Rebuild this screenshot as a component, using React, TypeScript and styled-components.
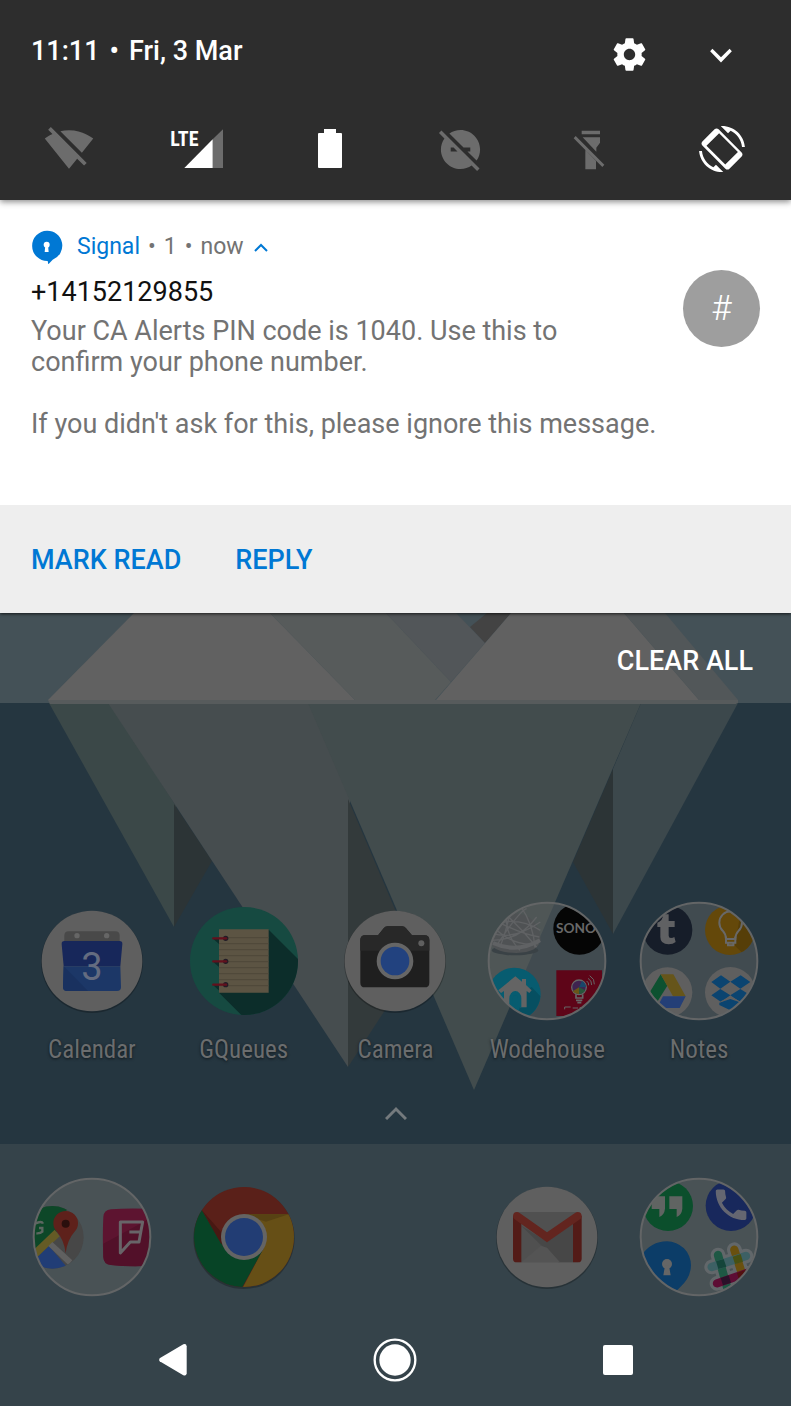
import React from "react";
import styled, { createGlobalStyle } from "styled-components";

const GlobalStyle = createGlobalStyle`
  *, *::before, *::after { box-sizing: border-box; }
  html, body, #root { min-height: 100%; }
  body { margin: 0; background: #35434a; font-family: Roboto, "Liberation Sans", sans-serif; }
  button { font: inherit; border: 0; background: none; padding: 0; color: inherit; cursor: pointer; }
  svg { display: block; flex: none; }
  h2, p { margin: 0; }
`;

const Screen = styled.main`
  display: flex;
  flex-direction: column;
  min-height: 100vh;
  overflow-x: hidden;
`;

/* ---------- quick settings ---------- */

const QuickSettings = styled.header`
  position: relative;
  z-index: 2;
  background: #2d2d2d;
  color: #fff;
  box-shadow: 0 2px 6px rgba(0, 0, 0, 0.45);
`;

const ClockRow = styled.div`
  display: flex;
  align-items: center;
  gap: 44px;
  height: 98px;
  padding: 10px 46px 0 31px;
`;

const Clock = styled.div`
  flex: 1;
  padding-bottom: 6px;
  font-size: 27px;
  font-weight: 500;
  line-height: 32px;
  display: flex;
  gap: 10px;
`;

const IconButton = styled.button`
  display: flex;
  align-items: center;
  justify-content: center;
  width: 48px;
  height: 48px;
`;

const Tiles = styled.div`
  display: grid;
  grid-template-columns: repeat(6, 1fr);
  height: 102px;
  padding: 0 4px;
`;

const Tile = styled.button<{ $on?: boolean }>`
  display: flex;
  align-items: center;
  justify-content: center;
  color: ${(p) => (p.$on ? "#fff" : "#6c6c6c")};
`;

/* ---------- notification ---------- */

const Notification = styled.article`
  position: relative;
  z-index: 1;
  background: #fff;
  box-shadow: 0 1px 3px rgba(0, 0, 0, 0.7);
`;

const NotificationContent = styled.div`
  min-height: 305px;
  padding: 29px 31px 64px;
`;

const AppLine = styled.div`
  display: flex;
  align-items: center;
  gap: 8px;
  height: 34px;
  margin-bottom: 7px;
  padding-top: 2px;
  font-size: 23px;
  line-height: 32px;
  color: #737373;
`;

const AppName = styled.span`
  margin-left: 6px;
  color: #0078d4;
`;

const Avatar = styled.div`
  float: right;
  display: flex;
  align-items: center;
  justify-content: center;
  width: 77px;
  height: 77px;
  margin-left: 48px;
  border-radius: 50%;
  background: #9e9e9e;
  color: #fff;
  font-size: 35px;
  font-weight: 300;
`;

const Sender = styled.h2`
  padding-top: 7px;
  margin-bottom: 8px;
  font-size: 27px;
  font-weight: 400;
  line-height: 31px;
  color: #111;
`;

const Message = styled.p`
  font-size: 27px;
  line-height: 31px;
  color: #737373;
  white-space: pre-line;
`;

const Actions = styled.div`
  display: flex;
  align-items: center;
  gap: 54px;
  height: 108px;
  padding: 2px 31px 0;
  background: #eee;
`;

const Action = styled.button`
  height: 64px;
  font-size: 27px;
  font-weight: 500;
  color: #0078d4;
`;

/* ---------- home screen ---------- */

const Home = styled.section`
  position: relative;
  isolation: isolate;
  background: #253640;
`;

const Wallpaper = styled.svg`
  position: absolute;
  inset: 0;
  z-index: -1;
  width: 100%;
  height: 100%;
`;

const ClearRow = styled.div`
  display: flex;
  justify-content: flex-end;
  align-items: center;
  height: 90px;
  padding: 6px 38px 0;
`;

const ClearAll = styled.button`
  height: 56px;
  font-size: 27px;
  font-weight: 500;
  color: #fff;
`;

const AppRow = styled.nav<{ $top: number }>`
  display: grid;
  grid-template-columns: repeat(5, 1fr);
  padding: ${(p) => p.$top}px 16px 0;
`;

const AppButton = styled.button`
  display: flex;
  flex-direction: column;
  align-items: center;
`;

const AppLabel = styled.span`
  margin-top: 13px;
  font-family: "Roboto Condensed", "Liberation Sans Narrow", Roboto, sans-serif;
  font-size: 25px;
  line-height: 32px;
  color: #6b6d6e;
  text-shadow: 0 1px 3px rgba(0, 0, 0, 0.6);
`;

const DrawerHandle = styled.button`
  display: flex;
  justify-content: center;
  align-items: center;
  width: 100%;
  height: 78px;
  padding-top: 16px;
`;

const Dock = styled.footer`
  flex: 1;
  background: #35434a;
`;

const SystemKeys = styled.nav`
  display: grid;
  grid-template-columns: repeat(3, 1fr);
  height: 92px;
  margin-top: 17px;
  padding: 0 62px;
`;

const SystemKey = styled.button`
  display: flex;
  align-items: center;
  justify-content: center;
`;

/* ---------- status glyphs ---------- */

const Glyph = ({ size, d }: { size: number; d: string }) => (
  <svg width={size} height={size} viewBox="0 0 24 24" fill="currentColor" fillRule="evenodd" aria-hidden="true">
    <path d={d} />
  </svg>
);

const GEAR =
  "M19.43 12.98c.04-.32.07-.64.07-.98s-.03-.66-.07-.98l2.11-1.65c.19-.15.24-.42.12-.64l-2-3.46c-.12-.22-.39-.3-.61-.22l-2.49 1c-.52-.4-1.08-.73-1.69-.98l-.38-2.65C14.46 2.18 14.25 2 14 2h-4c-.25 0-.46.18-.49.42l-.38 2.65c-.61.25-1.17.59-1.69.98l-2.49-1c-.23-.09-.49 0-.61.22l-2 3.46c-.13.22-.07.49.12.64l2.11 1.65c-.04.32-.07.65-.07.98s.03.66.07.98l-2.11 1.65c-.19.15-.24.42-.12.64l2 3.46c.12.22.39.3.61.22l2.49-1c.52.4 1.08.73 1.69.98l.38 2.65c.03.24.24.42.49.42h4c.25 0 .46-.18.49-.42l.38-2.65c.61-.25 1.17-.59 1.69-.98l2.49 1c.23.09.49 0 .61-.22l2-3.46c.12-.22.07-.49-.12-.64l-2.11-1.65zM12 15.5c-1.93 0-3.5-1.57-3.5-3.5s1.57-3.5 3.5-3.5 3.5 1.57 3.5 3.5-1.57 3.5-3.5 3.5z";
const EXPAND = "M16.9 9 12 13.8 7.1 9 5.8 10.4 12 16.8l6.2-6.4z";
const WIFI_OFF =
  "M23.64 7c-.45-.34-4.93-4-11.64-4-1.5 0-2.89.19-4.15.48L18.18 13.8 23.64 7zm-6.6 8.22L3.27 1.44 2 2.72l2.05 2.06C1.91 5.76.59 6.82.36 7l11.63 14.49.01.01.01-.01 3.9-4.86 3.32 3.32 1.27-1.27-3.46-3.46z";
const DND_OFF =
  "M17 11v2h-1.46l4.68 4.68C21.34 16.07 22 14.11 22 12c0-5.52-4.48-10-10-10-2.11 0-4.07.66-5.68 1.78L13.54 11H17zM2.27 2.27L1 3.54l2.78 2.78C2.66 7.93 2 9.89 2 12c0 5.52 4.48 10 10 10 2.11 0 4.07-.66 5.68-1.78L20.46 23l1.27-1.27L2.27 2.27zM7 13v-2h1.46l2 2H7z";
const ROTATE =
  "M16.48 2.52c3.27 1.55 5.61 4.72 5.97 8.48h1.5C23.44 4.84 18.29 0 12 0l-.66.03 3.81 3.81 1.33-1.32zm-6.25-.77c-.59-.59-1.54-.59-2.12 0L1.75 8.11c-.59.59-.59 1.54 0 2.12l12.02 12.02c.59.59 1.54.59 2.12 0l6.36-6.36c.59-.59.59-1.54 0-2.12L10.23 1.75zM13.7 20.1 3.9 10.3l6.6-6.5 9.8 9.8zM7.52 21.48C4.25 19.94 1.91 16.76 1.55 13H.05C.56 19.16 5.71 24 12 24l.66-.03-3.81-3.81-1.33 1.32z";
const PHONE =
  "M6.62 10.79c1.44 2.83 3.76 5.14 6.59 6.59l2.2-2.2c.27-.27.67-.36 1.02-.24 1.12.37 2.33.57 3.57.57.55 0 1 .45 1 1V20c0 .55-.45 1-1 1-9.39 0-17-7.61-17-17 0-.55.45-1 1-1h3.5c.55 0 1 .45 1 1 0 1.25.2 2.45.57 3.57.11.35.03.74-.25 1.02l-2.2 2.2z";

const LteGlyph = () => (
  <svg width="60" height="46" viewBox="508 380 180 138" aria-hidden="true">
    <text x="509" y="441" fill="#fff" fontFamily='"Roboto Condensed","Liberation Sans Narrow",Roboto' fontWeight="700" fontSize="60">
      LTE
    </text>
    <path d="M636 420 667 390V506H636z" fill="#6c6c6c" />
    <path d="M551 506 636 420V506z" fill="#fff" />
  </svg>
);

const BatteryGlyph = () => (
  <svg width="26" height="40" viewBox="0 0 26 40" fill="currentColor" aria-hidden="true">
    <path d="M7 0H19V4H24Q25 4 25 5V38Q25 39 24 39H2Q1 39 1 38V5Q1 4 2 4H7z" />
  </svg>
);

const TorchOffGlyph = () => (
  <svg width="41" height="46" viewBox="540 380 123 138" fill="currentColor" aria-hidden="true">
    <path d="M572 394H627V405H572zM575 414H627V430L616 445V457zM583 452 615 485V510H583zM554 410 640 496 634 503 548 417z" />
  </svg>
);

const SignalBadge = () => (
  <svg width="32" height="34" viewBox="96 52 96 102" aria-hidden="true">
    <path d="M144 54a45 45 0 0 1 17 87L148 155 146 145A45 45 0 1 1 144 54z" fill="#0078d4" />
    <circle cx="143" cy="96" r="9" fill="#fff" />
    <path d="M139 98h8l2 20h-12z" fill="#fff" />
  </svg>
);

/* ---------- launcher icons ---------- */

const AppIcon = ({ cx, cy, children }: { cx: number; cy: number; children: React.ReactNode }) => (
  <svg width="120" height="120" viewBox={`${cx - 180} ${cy - 180} 360 360`} aria-hidden="true">
    {children}
  </svg>
);

const Plate = ({ cx, cy }: { cx: number; cy: number }) => (
  <>
    <circle cx={cx} cy={cy + 3} r="153" fill="#000" opacity="0.25" />
    <circle cx={cx} cy={cy} r="151" fill="#5f5f5f" />
  </>
);

const Folder = ({ id, cx, cy, children }: { id: string; cx: number; cy: number; children: React.ReactNode }) => (
  <AppIcon cx={cx} cy={cy}>
    <clipPath id={id}>
      <circle cx={cx} cy={cy} r="174" />
    </clipPath>
    <circle cx={cx} cy={cy} r="176" fill="#5c5f5f" fillOpacity="0.52" />
    <g clipPath={`url(#${id})`}>{children}</g>
    <circle cx={cx} cy={cy} r="175" fill="none" stroke="#636566" strokeWidth="6" />
  </AppIcon>
);

const CalendarIcon = () => (
  <AppIcon cx={217} cy={212}>
    <Plate cx={217} cy={212} />
    <path d="M134 160V136q0-13 13-13H287q13 0 13 13V160z" fill="#494949" />
    <circle cx="172" cy="136" r="8" fill="#666" />
    <circle cx="261" cy="136" r="8" fill="#666" />
    <path d="M135 152H299q10 0 9 10L302 228H132L126 162q-1-10 9-10z" fill="#17275a" />
    <path d="M132 228H302L304 290q0 12-12 12H142q-12 0-12-12z" fill="#1c3767" />
    <path d="M132 228 205 302H142q-12 0-12-12z" fill="#19315f" />
    <text x="217" y="268" textAnchor="middle" fontFamily="Roboto" fontSize="114" fill="#646c80">
      3
    </text>
  </AppIcon>
);

const GQueuesIcon = () => (
  <AppIcon cx={672} cy={212}>
    <clipPath id="gq">
      <circle cx="672" cy="212" r="162" />
    </clipPath>
    <g clipPath="url(#gq)">
      <path d="M500 40H850V390H500z" fill="#164a41" />
      <path d="M746 118 850 222V390H680L597 307z" fill="#0c2d2a" />
      <path d="M580 146 598 162V146zM580 215 598 231V215zM580 285 598 301V285z" fill="#0c2d2a" />
    </g>
    <path d="M597 117H746V307H597z" fill="#5c5443" />
    <path
      d="M597 142H746M597 160H746M597 178H746M597 196H746M597 214H746M597 232H746M597 250H746M597 268H746M597 286H746"
      stroke="#4f4839"
      strokeWidth="3"
    />
    {[144, 213, 283].map((y) => (
      <g key={y}>
        <circle cx="617" cy={y} r="8" fill="#221c26" />
        <path d={`M580 ${y}H618`} stroke="#63101d" strokeWidth="7" strokeLinecap="round" />
      </g>
    ))}
  </AppIcon>
);

const CameraIcon = () => (
  <AppIcon cx={227} cy={212}>
    <Plate cx={227} cy={212} />
    <path d="M137 135H176L193 114q4-6 12-6H248q8 0 12 6L278 135H316q14 0 14 14V277q0 14-14 14H137q-14 0-14-14V149q0-14 14-14z" fill="#1f1f1f" />
    <path d="M137 135H176L193 114q4-6 12-6H248q8 0 12 6L278 135H316q14 0 14 14V181H123V149q0-14 14-14z" fill="#282828" />
    <circle cx="306" cy="159" r="9" fill="#5f5f5f" />
    <circle cx="227" cy="212" r="55" fill="#666" />
    <circle cx="227" cy="212" r="43" fill="#22427f" />
  </AppIcon>
);

const WodehouseIcon = () => (
  <Folder id="wode" cx={681} cy={212}>
    <ellipse cx="585" cy="180" rx="70" ry="15" fill="#3a4246" />
    <path d="M519 170A73 76 0 1 1 661 150Q655 186 590 188 540 188 519 170z" fill="#4f5254" />
    <g fill="none" stroke="#606264" strokeWidth="4">
      <path d="M519 100Q600 80 661 120M520 130Q580 150 661 95M530 165Q600 60 620 55M545 60Q600 110 650 170M560 50Q550 130 600 180M520 110Q580 170 655 160M600 45Q640 100 645 172M525 90Q600 130 658 140M515 150Q600 150 650 80M575 45Q560 120 540 170" />
      <path d="M519 158Q590 190 660 150" strokeWidth="12" />
    </g>
    <circle cx="778" cy="115" r="78" fill="#050505" />
    <text x="708" y="128" fontFamily="Lato" fontWeight="700" fontSize="41" fill="#686868">
      SONO
    </text>
    <circle cx="583" cy="311" r="79" fill="#075c70" />
    <path d="M661 318A79 79 0 0 1 583 390L600 351H618V300L635 290z" fill="#064f61" />
    <path d="M535 300 586 258 606 274V266H618V284L635 300 628 308 620 302V351H600V322A14 18 0 0 0 572 322V351H552V302L543 308z" fill="#646464" />
    <path d="M568 351V324A18 22 0 0 1 604 324V351H594V326A8 11 0 0 0 578 326V351z" fill="#075c70" />
    <path d="M709 240H846V377H709z" fill="#5e0518" />
    <circle cx="777" cy="291" r="22" fill="#3f2350" stroke="#666" strokeWidth="4" />
    <path d="M777 291 758 303A22 22 0 0 0 777 311z" fill="#6a5518" />
    <path d="M777 291V311A22 22 0 0 0 796 300z" fill="#27563a" />
    <path d="M777 291 798 290A22 22 0 0 0 786 272z" fill="#19466a" />
    <path d="M768 312V323H788V312M768 330H787M772 337H784" stroke="#666" strokeWidth="5" fill="none" />
    <path d="M800 272Q807 277 806 285M804 264Q816 271 815 284M809 256Q825 266 823 282" stroke="#666" strokeWidth="3" fill="none" />
    <path d="M734 357V350H752M758 353H774M779 352H812" stroke="#666" strokeWidth="3" fill="none" />
  </Folder>
);

const NotesIcon = () => (
  <Folder id="notes" cx={297} cy={212}>
    <circle cx="203" cy="119" r="74" fill="#161d29" />
    <path
      d="M190 72H206V92H224V110H206V136Q206 143 213 143 219 143 223 140L227 155Q219 162 206 162 181 162 181 140V110H172V97Q188 93 190 72z"
      fill="#606163"
    />
    <clipPath id="keep">
      <circle cx="390" cy="119" r="75" />
    </clipPath>
    <circle cx="390" cy="119" r="75" fill="#64480a" />
    <path d="M418 88 480 150V210H450L405 166z" fill="#563e08" clipPath="url(#keep)" />
    <path d="M378 146Q378 132 368 121A34 34 0 1 1 416 121Q406 132 406 146z" fill="none" stroke="#686868" strokeWidth="6" />
    <path d="M378 139V157H406V139M384 157V165H400V157" stroke="#686868" strokeWidth="6" fill="none" />
    <circle cx="202" cy="306" r="75" fill="#5f5f5f" />
    <path d="M182 252 202 286 170 337 151 303z" fill="#0d5130" />
    <path d="M182 252H220L257 318H219z" fill="#66551a" />
    <path d="M189 318H257L239 353H170z" fill="#243f77" />
    <circle cx="391" cy="306" r="76" fill="#5f5f5f" />
    <path
      d="M334 275 363 255 391 274 361 295zM391 274 422 255 451 275 421 295zM334 315 361 296 391 315 363 335zM391 315 421 296 451 315 420 335zM358 337 391 326 424 337V344L391 360 358 344z"
      fill="#0b4470"
    />
    <path d="M361 335 391 319 421 335" fill="none" stroke="#5f5f5f" strokeWidth="3" />
  </Folder>
);

const PlacesIcon = () => (
  <Folder id="places" cx={217} cy={230}>
    <clipPath id="map">
      <circle cx="98" cy="231" r="94" />
    </clipPath>
    <g clipPath="url(#map)">
      <path d="M0 130H200V330H0z" fill="#474747" />
      <path d="M0 130H150L110 215 0 310z" fill="#0d4728" />
      <path d="M40 270 105 208 120 228 48 295z" fill="#655b25" />
      <path d="M48 295 88 257 150 330H40z" fill="#213d76" />
      <path d="M86 257 98 245 158 300 146 314z" fill="#606060" />
    </g>
    <path d="M46 190Q66 180 70 190M58 203H68V214Q62 220 50 219" fill="none" stroke="#5c6660" strokeWidth="7" />
    <path d="M138 279Q134 240 112 215A37 37 0 1 1 164 215Q142 240 138 279z" fill="#5e211b" />
    <circle cx="138" cy="190" r="12" fill="#2a0f0d" />
    <path d="M274 147Q330 142 400 146V316Q330 320 274 314 252 312 251 290 248 230 251 170 252 149 274 147z" fill="#5d1430" />
    <path d="M251 250 400 170V316Q330 320 274 314 252 312 251 290z" fill="#521029" />
    <path d="M302 185H369L365 206 358 245H332L302 278zM329 215H362" fill="none" stroke="#686468" strokeWidth="9" strokeLinejoin="round" />
  </Folder>
);

const ChromeIcon = () => (
  <AppIcon cx={672} cy={230}>
    <circle cx="672" cy="234" r="152" fill="#000" opacity="0.25" />
    <clipPath id="chrome">
      <circle cx="672" cy="230" r="150" />
    </clipPath>
    <g clipPath="url(#chrome)">
      <path d="M522 80H822V380H522z" fill="#5a2019" />
      <path d="M672 162H830V390H664L731 264z" fill="#664f16" />
      <path d="M540 140 613 264 672 298 731 264 666 382H510V140z" fill="#074426" />
      <path d="M546 150 604 252 612 225z" fill="#481813" />
      <path d="M672 162H806L738 184z" fill="#574213" />
    </g>
    <circle cx="672" cy="230" r="69" fill="#646464" />
    <circle cx="672" cy="230" r="57" fill="#223d74" />
  </AppIcon>
);

const GmailIcon = () => (
  <AppIcon cx={201} cy={230}>
    <Plate cx={201} cy={230} />
    <path d="M110 155H294V306H110z" fill="#505050" />
    <path d="M124 196 235 306H279V190L201 244z" fill="#474747" />
    <path d="M124 306 183 256 201 262 240 306z" fill="#545454" />
    <path d="M99 166H124V306H110q-11 0-11-11zM279 166H305V295q0 11-11 11H279z" fill="#531b17" />
    <path d="M99 168q0-13 12-13 4 0 8 3L201 216 285 158q4-3 8-3 12 0 12 13 0 6-5 9L201 246 104 177q-5-3-5-9z" fill="#63251f" />
  </AppIcon>
);

const ChatIcon = () => (
  <Folder id="chat" cx={656} cy={230}>
    <circle cx="563" cy="137" r="75" fill="#0b4f2c" />
    <path d="M514 108H554V145Q552 164 537 170V146H514zM567 108H606V145Q604 164 589 170V146H567z" fill="#606462" />
    <circle cx="752" cy="136" r="76" fill="#18285c" />
    <path d={PHONE} transform="translate(691 72) scale(5.1)" fill="#646671" />
    <path d="M560 243A72 72 0 0 1 632 315Q631 352 600 380L580 400 480 340V290Q510 243 560 243z" fill="#0c3d68" />
    <circle cx="560" cy="311" r="15" fill="#666" />
    <path d="M554 316H566L571 345H549z" fill="#666" />
    <g fill="none" strokeLinecap="round">
      <path d="M713 284 740 380M762 268 788 350M694 320 797 287M710 369 800 338" stroke="#62676a" strokeWidth="44" />
      <path d="M713 284 740 380" stroke="#1e5844" strokeWidth="25" />
      <path d="M762 268 788 350" stroke="#69500f" strokeWidth="25" />
      <path d="M694 320 797 287" stroke="#3d6064" strokeWidth="25" />
      <path d="M710 369 800 338" stroke="#5d0d34" strokeWidth="25" />
    </g>
    <path d="M707 303 730 296 738 319 714 326z" fill="#14453a" />
    <path d="M757 289 781 281 788 304 764 311z" fill="#485012" />
    <path d="M721 353 745 345 752 367 728 375z" fill="#2b1029" />
    <path d="M770 338 797 328 790 352 776 359z" fill="#521010" />
  </Folder>
);

const apps: [string, React.FC][] = [
  ["Calendar", CalendarIcon],
  ["GQueues", GQueuesIcon],
  ["Camera", CameraIcon],
  ["Wodehouse", WodehouseIcon],
  ["Notes", NotesIcon],
];

const dock: [string, React.FC | null][] = [
  ["Places", PlacesIcon],
  ["Chrome", ChromeIcon],
  ["", null],
  ["Gmail", GmailIcon],
  ["Chat", ChatIcon],
];

const Iceberg = () => (
  <Wallpaper viewBox="0 613 791 531" preserveAspectRatio="xMidYMin slice" aria-hidden="true">
    <path d="M-800 613H1600V1400H-800z" fill="#253640" />
    <path d="M-800 613H1600V703H-800z" fill="#445157" />
    <path d="M134 613H270L355 700H48z" fill="#616161" />
    <path d="M270 613H386L451 682 435 700H355z" fill="#575b5b" />
    <path d="M386 613H456L485 643 451 682z" fill="#525659" />
    <path d="M487 613H511L485 643 470 627z" fill="#434343" />
    <path d="M511 613H624L699 700H436z" fill="#616161" />
    <path d="M624 613H665L738 700H699z" fill="#525759" />
    <path d="M49 703H110L176 806 174 927z" fill="#3b4848" />
    <path d="M174 804 212 861 174 927z" fill="#2c3436" />
    <path d="M641 703H738L613 934V769z" fill="#3c484c" />
    <path d="M613 769V934L573 862z" fill="#2c3436" />
    <path d="M108 703H320L350 799 348 1067z" fill="#464d4f" />
    <path d="M348 799 417 961 348 1067z" fill="#333a3b" />
    <path d="M308 703H641L474 1090z" fill="#424c4d" />
    <path d="M48 700H738V703H737L736 704H50z" fill="#575b5c" />
  </Wallpaper>
);

export default function App() {
  return (
    <Screen>
      <GlobalStyle />
      <QuickSettings>
        <ClockRow>
          <Clock>
            <span>11:11</span>
            <span>•</span>
            <span>Fri, 3 Mar</span>
          </Clock>
          <IconButton aria-label="Settings">
            <Glyph size={39} d={GEAR} />
          </IconButton>
          <IconButton aria-label="Expand">
            <Glyph size={42} d={EXPAND} />
          </IconButton>
        </ClockRow>
        <Tiles>
          <Tile aria-label="Wi-Fi off">
            <Glyph size={50} d={WIFI_OFF} />
          </Tile>
          <Tile $on aria-label="Mobile data">
            <LteGlyph />
          </Tile>
          <Tile $on aria-label="Battery">
            <BatteryGlyph />
          </Tile>
          <Tile aria-label="Do not disturb off">
            <Glyph size={47} d={DND_OFF} />
          </Tile>
          <Tile aria-label="Torch off">
            <TorchOffGlyph />
          </Tile>
          <Tile $on aria-label="Auto-rotate">
            <Glyph size={46} d={ROTATE} />
          </Tile>
        </Tiles>
      </QuickSettings>

      <Notification>
        <NotificationContent>
          <AppLine>
            <SignalBadge />
            <AppName>Signal</AppName>
            <span>•</span>
            <span>1</span>
            <span>•</span>
            <span>now</span>
            <svg width="17" height="9" viewBox="-2 0 17 9" fill="none" stroke="#0078d4" strokeWidth="2" aria-hidden="true">
              <path d="M1 8 7 2 13 8" />
            </svg>
          </AppLine>
          <Avatar>#</Avatar>
          <Sender>+14152129855</Sender>
          <Message>
            {"Your CA Alerts PIN code is 1040. Use this to confirm your phone number.\n\nIf you didn't ask for this, please ignore this message."}
          </Message>
        </NotificationContent>
        <Actions>
          <Action>MARK READ</Action>
          <Action>REPLY</Action>
        </Actions>
      </Notification>

      <Home>
        <Iceberg />
        <ClearRow>
          <ClearAll>CLEAR ALL</ClearAll>
        </ClearRow>
        <AppRow $top={198} aria-label="Apps">
          {apps.map(([name, Icon]) => (
            <AppButton key={name}>
              <Icon />
              <AppLabel>{name}</AppLabel>
            </AppButton>
          ))}
        </AppRow>
        <DrawerHandle aria-label="All apps">
          <svg width="22" height="14" viewBox="0 0 22 14" fill="none" stroke="#747a7d" strokeWidth="3" aria-hidden="true">
            <path d="M1 13 11 3 21 13" />
          </svg>
        </DrawerHandle>
      </Home>

      <Dock>
        <AppRow $top={33} aria-label="Dock">
          {dock.map(([name, Icon]) =>
            Icon ? (
              <AppButton key={name} aria-label={name}>
                <Icon />
              </AppButton>
            ) : (
              <span key="gap" />
            )
          )}
        </AppRow>
        <SystemKeys aria-label="System">
          <SystemKey aria-label="Back">
            <svg width="28" height="32" viewBox="57 72 84 96" aria-hidden="true">
              <path d="M59 115 130 73q9-3 10 6V160q-1 9-10 6L59 124q-3-4 0-9z" fill="#fff" />
            </svg>
          </SystemKey>
          <SystemKey aria-label="Home">
            <svg width="44" height="44" viewBox="-66 -66 132 132" aria-hidden="true">
              <circle r="61" fill="none" stroke="#fff" strokeWidth="7" />
              <circle r="47" fill="#fff" />
            </svg>
          </SystemKey>
          <SystemKey aria-label="Recent apps">
            <svg width="30" height="30" viewBox="0 0 30 30" aria-hidden="true">
              <rect width="30" height="30" rx="2" fill="#fff" />
            </svg>
          </SystemKey>
        </SystemKeys>
      </Dock>
    </Screen>
  );
}
